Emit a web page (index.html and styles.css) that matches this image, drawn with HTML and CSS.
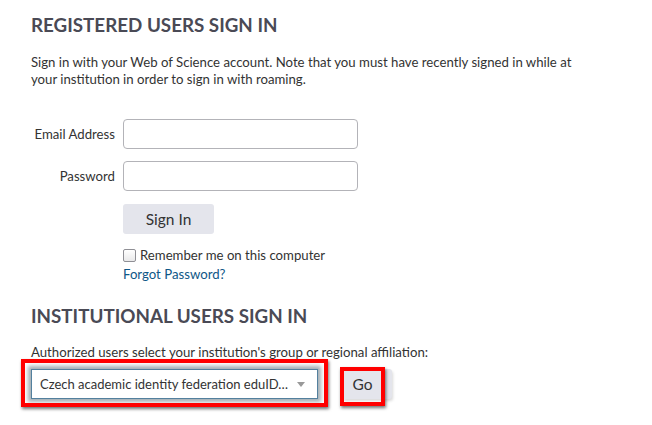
FILE: index.html
```html
<!DOCTYPE html>
<html lang="en">
<head>
<meta charset="utf-8">
<title>Sign In</title>
<link rel="stylesheet" href="styles.css">
</head>
<body>
<div class="page">
  <h2 class="heading">REGISTERED USERS SIGN IN</h2>
  <p class="intro">Sign in with your Web of Science account. Note that you must have recently signed in while at your institution in order to sign in with roaming.</p>
  <form class="signin">
    <label class="field-label" for="email">Email Address</label>
    <input class="field" id="email" type="text">
    <label class="field-label" for="pw">Password</label>
    <input class="field" id="pw" type="password">
    <div class="actions">
      <button type="button" class="btn btn-signin">Sign In</button>
      <label class="remember"><span class="checkbox"></span>Remember me on this computer</label>
      <a class="forgot" href="#">Forgot Password?</a>
    </div>
  </form>
  <h2 class="heading heading-inst">INSTITUTIONAL USERS SIGN IN</h2>
  <p class="auth">Authorized users select your institution's group or regional affiliation:</p>
  <div class="inst-row">
    <div class="select-wrap">
      <div class="select"><span class="select-text">Czech academic identity federation eduID…</span><span class="caret"></span></div>
    </div>
    <div class="go-wrap">
      <button type="button" class="btn btn-go">Go</button>
    </div>
  </div>
</div>
</body>
</html>
```
FILE: styles.css
```css
html, body {
  margin: 0;
  padding: 0;
  background: #fff;
}
body {
  font-family: "Lato", "Open Sans", sans-serif;
  color: #333;
  font-size: 13.2px;
  min-height: 425px;
}
.page {
  padding: 13px 0 0 31px;
  width: 560px;
}
.heading {
  margin: 0;
  font-size: 18.8px;
  line-height: 24px;
  font-weight: 700;
  color: #4a4a55;
}
.intro {
  margin: 17px 0 0;
  line-height: 17px;
  width: 560px;
}
.signin {
  display: grid;
  grid-template-columns: 84px 235px;
  column-gap: 8px;
  row-gap: 12px;
  margin-top: 31px;
  align-items: center;
}
.field-label {
  text-align: right;
  white-space: nowrap;
}
.field {
  box-sizing: border-box;
  height: 30px;
  width: 235px;
  border: 1px solid #b3b3b8;
  border-radius: 4px;
  margin: 0;
}
.actions {
  grid-column: 2;
  display: flex;
  flex-direction: column;
  align-items: flex-start;
  margin-top: 1px;
}
.btn {
  font-family: inherit;
  border: 0;
  background: #e4e5ec;
  color: #333;
  border-radius: 3px;
  cursor: pointer;
}
.btn-signin {
  width: 91px;
  height: 30px;
  font-size: 15.5px;
}
.remember {
  display: flex;
  align-items: center;
  margin-top: 12px;
  line-height: 18px;
}
.checkbox {
  width: 11px;
  height: 11px;
  border: 1px solid #8f8f95;
  border-radius: 2px;
  background: linear-gradient(#fff, #e9e9ea);
  margin-right: 4px;
}
.forgot {
  color: #0f5787;
  text-decoration: none;
  line-height: 20px;
}
.heading-inst {
  margin-top: 20px;
}
.auth {
  margin: 16px 0 0;
  line-height: 17px;
}
.inst-row {
  display: flex;
  align-items: center;
  margin-top: 8px;
  gap: 24px;
}
.select-wrap {
  position: relative;
}
.select-wrap::after {
  content: "";
  position: absolute;
  top: -10px;
  left: -10px;
  right: -10px;
  bottom: -8px;
  border: 4px solid #f00;
  box-shadow: 1px 2px 3px rgba(0,0,0,0.55);
  pointer-events: none;
}
.select {
  box-sizing: border-box;
  width: 287px;
  height: 30px;
  border: 1px solid #53809e;
  background: #fff;
  display: flex;
  align-items: center;
  padding: 0 12px 0 8px;
  box-shadow: 0 0 4px 3px rgba(100, 118, 130, 0.6);
}
.select-text {
  flex: 1;
  white-space: nowrap;
  margin-right: 4px;
  font-size: 13px;
}
.caret {
  width: 0;
  height: 0;
  border-left: 4px solid transparent;
  border-right: 4px solid transparent;
  border-top: 5px solid #999;
}
.go-wrap {
  position: relative;
}
.go-wrap::after {
  content: "";
  position: absolute;
  top: -2px;
  left: -2px;
  right: 7px;
  bottom: -7px;
  border: 4px solid #f00;
  box-shadow: 1px 2px 3px rgba(0,0,0,0.55);
  pointer-events: none;
}
.btn-go {
  width: 50px;
  height: 30px;
  font-size: 15.5px;
  padding: 0 9px 0 0;
  box-shadow: 1px 2px 3px rgba(0,0,0,0.15);
}
```
